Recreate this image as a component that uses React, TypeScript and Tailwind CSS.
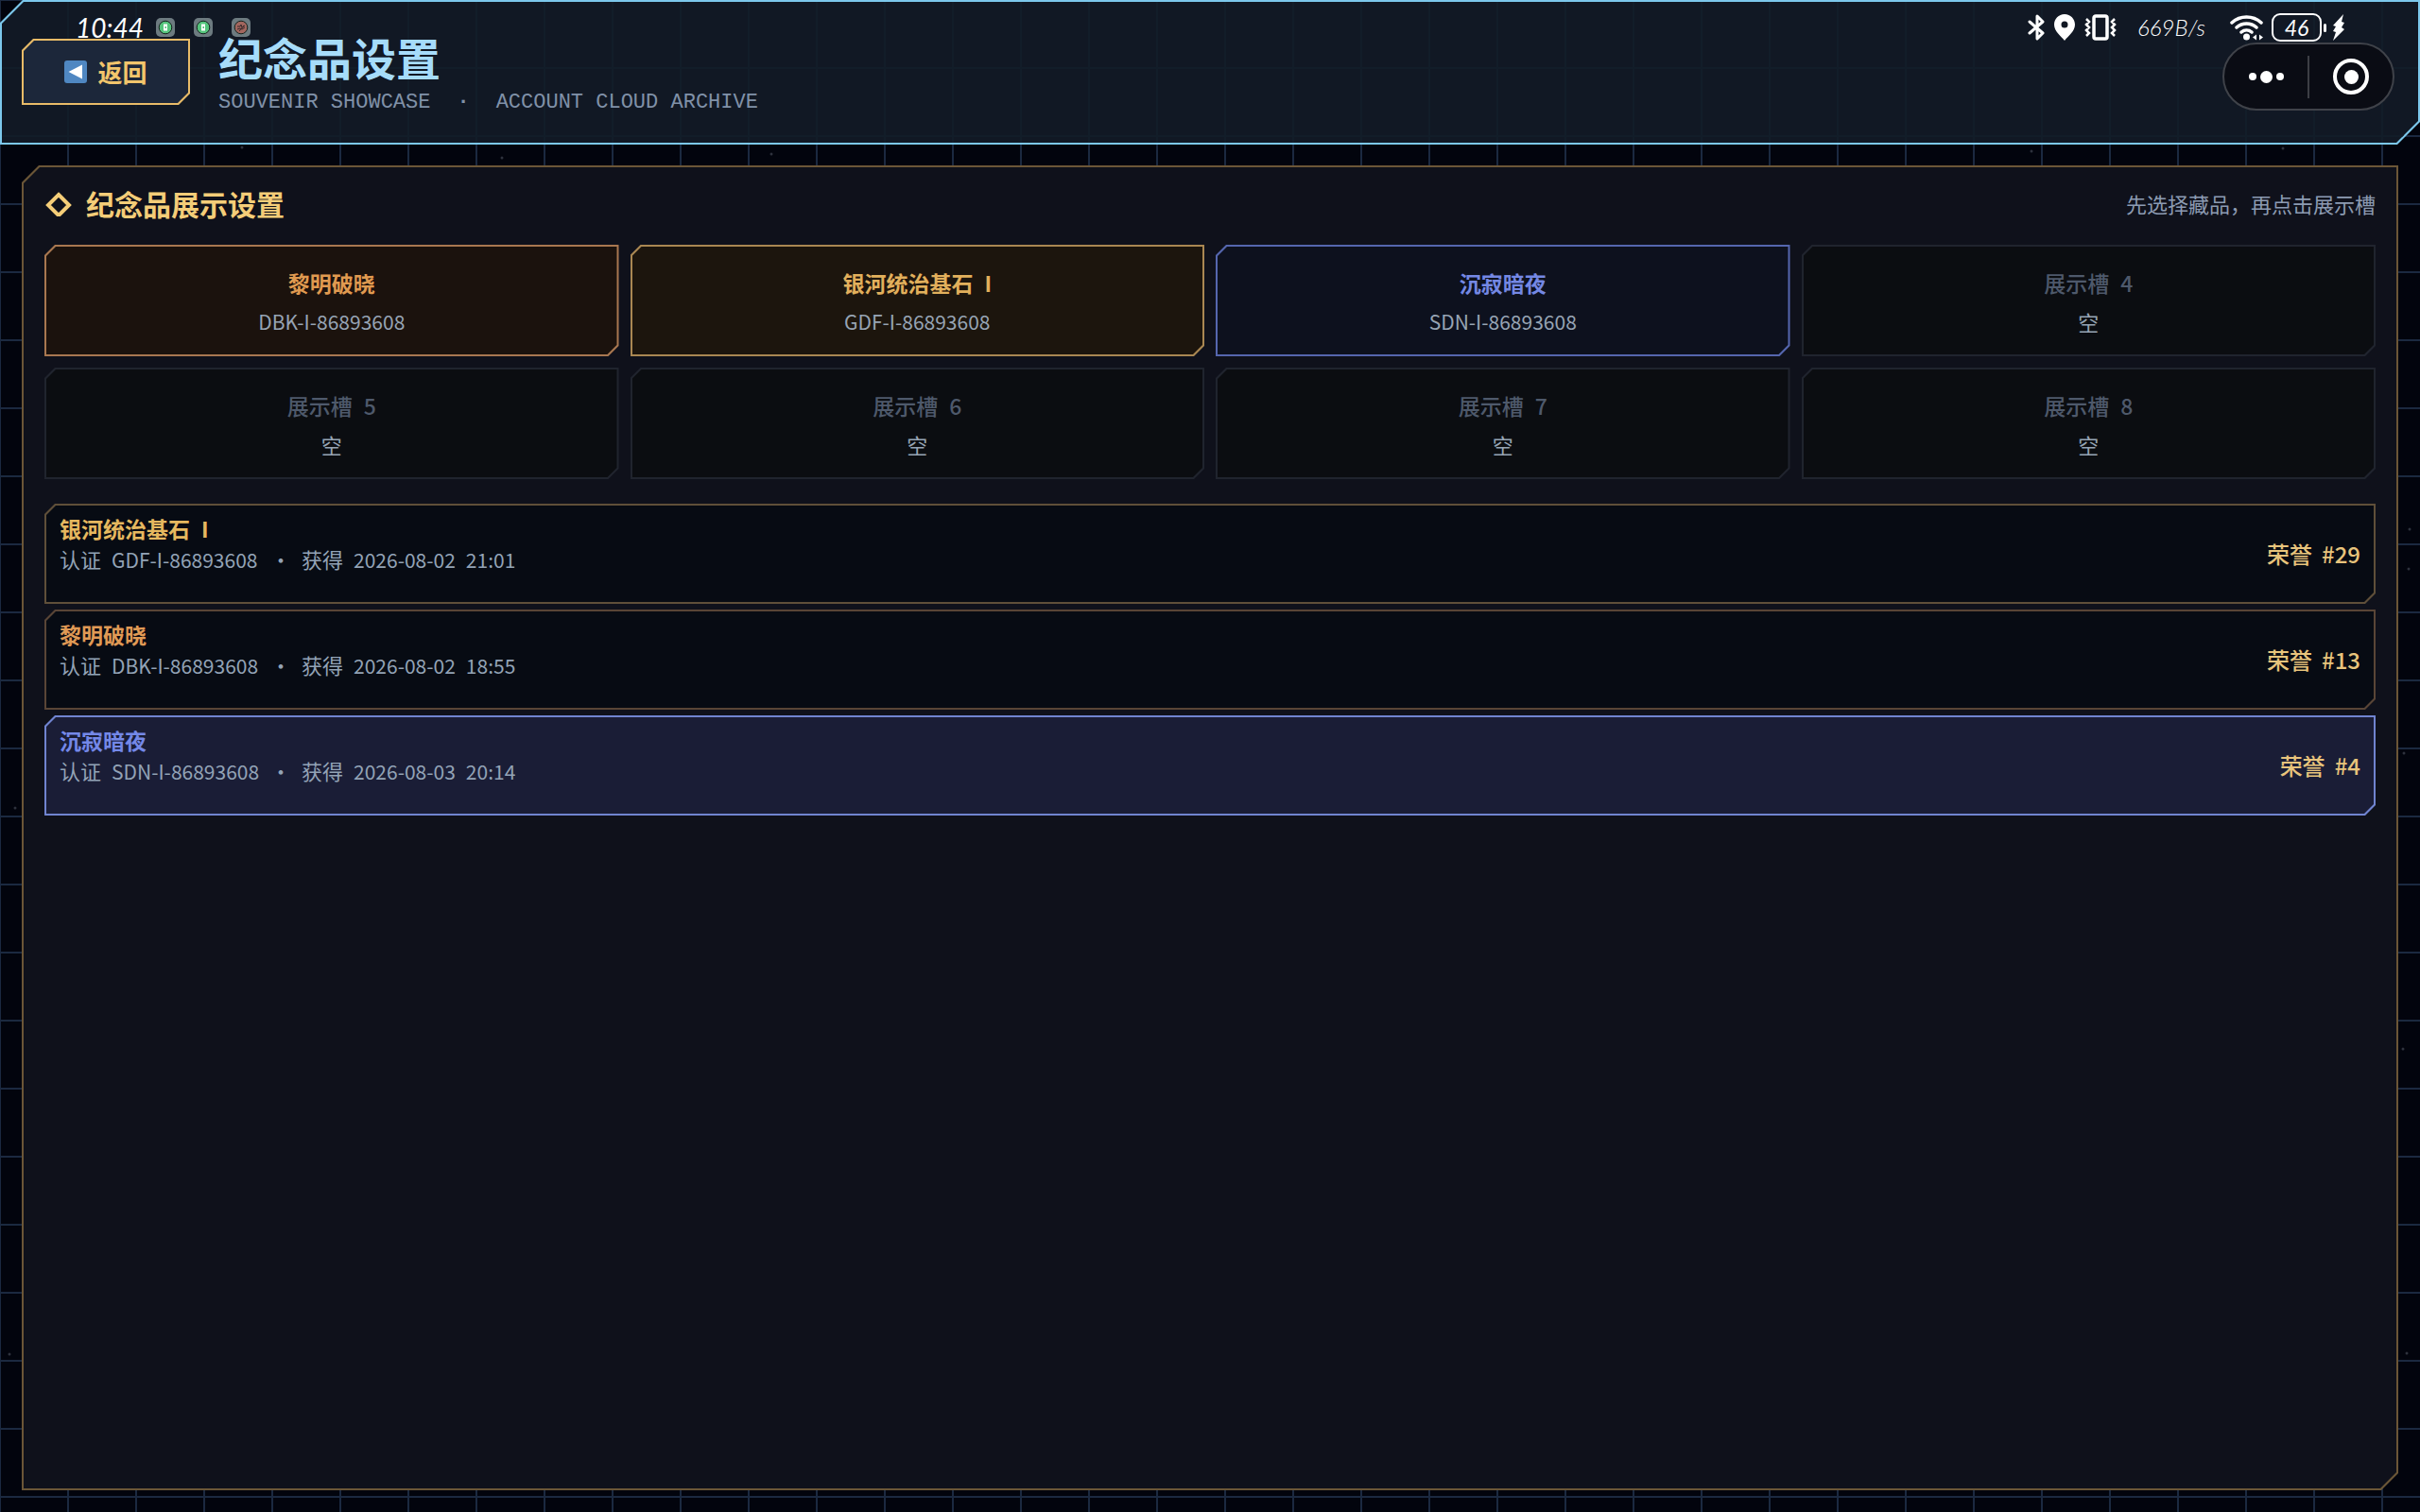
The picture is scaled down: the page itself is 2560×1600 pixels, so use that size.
import React from "react";

// Panels share one silhouette: the top-left and bottom-right corners are cut.
const CUT =
  "[clip-path:polygon(var(--cut)_0,100%_0,100%_calc(100%_-_var(--cut)),calc(100%_-_var(--cut))_100%,0_100%,0_var(--cut))]";

const slots = [
  { name: "黎明破晓", code: "DBK-I-86893608", edge: "bg-[#a87750]", fill: "bg-[#1b120d]", text: "text-[#e09a50]" },
  { name: "银河统治基石", mark: "I", code: "GDF-I-86893608", edge: "bg-[#a98752]", fill: "bg-[#1c150d]", text: "text-[#e2b05c]" },
  { name: "沉寂暗夜", code: "SDN-I-86893608", edge: "bg-[#5566ae]", fill: "bg-[#0d111e]", text: "text-[#7488e4]" },
  { name: "展示槽", mark: "4" },
  { name: "展示槽", mark: "5" },
  { name: "展示槽", mark: "6" },
  { name: "展示槽", mark: "7" },
  { name: "展示槽", mark: "8" },
];

const items = [
  {
    name: "银河统治基石",
    mark: "I",
    code: "GDF-I-86893608",
    date: "2026-08-02",
    time: "21:01",
    honor: "#29",
    edge: "bg-[#5f4f39]",
    fill: "bg-[#070b13]",
    text: "text-[#e6b85f]",
  },
  {
    name: "黎明破晓",
    code: "DBK-I-86893608",
    date: "2026-08-02",
    time: "18:55",
    honor: "#13",
    edge: "bg-[#594536]",
    fill: "bg-[#070b13]",
    text: "text-[#e09a55]",
  },
  {
    name: "沉寂暗夜",
    code: "SDN-I-86893608",
    date: "2026-08-03",
    time: "20:14",
    honor: "#4",
    edge: "bg-[#7084d0]",
    fill: "bg-[#1a1d36]",
    text: "text-[#7488e8]",
  },
];

const stars = [
  [256, 156], [531, 167], [816, 163], [2149, 160], [2415, 157], [2548, 602],
  [2542, 1110], [2546, 1432], [2549, 560], [16, 855], [10, 1433], [2543, 797],
];

const StatusBar = () => {
  return (
    <div className="absolute inset-x-0 top-0 flex items-center justify-between pl-20 pr-[79px] pt-[14px] h-11 text-white pointer-events-none font-['Lato']">
      <div className="flex items-center">
        <span className="w-[85px] text-[28px] leading-8 italic">10:44</span>
        <div className="flex gap-5">
          {["#55c47c", "#55c47c", "#a2665e"].map((color, i) => (
            <svg key={i} width="20" height="20" viewBox="0 0 20 20">
              <rect width="20" height="20" rx="5" fill="#6d7b80" />
              <circle cx="10" cy="10" r="6.8" fill={color} stroke="#15231d" strokeWidth="1" />
              {i < 2 ? (
                <>
                  <rect x="8" y="6.5" width="4" height="7" fill="#fff" />
                  <rect x="9.5" y="9" width="1.5" height="2" fill={color} />
                </>
              ) : (
                <path d="M6 9h3l1-2 1 3 3-2M6 12l3-1 2 1 3-2M8 14l5-6" stroke="#38292b" fill="none" />
              )}
            </svg>
          ))}
        </div>
      </div>
      <div className="flex items-center">
        <svg width="18" height="28" viewBox="0 0 18 28" fill="none" stroke="#fff" strokeWidth="3" strokeLinejoin="round" strokeLinecap="round">
          <path d="M2 8l14 12-6 6V2l6 6L2 20" />
        </svg>
        <svg className="ml-[10px]" width="22" height="28" viewBox="0 0 22 28">
          <path fillRule="evenodd" fill="#fff" d="M11 0C4.600 0 0 5 0 11c0 7 7 12 11 17 4-5 11-10 11-17C22 5 17.400 0 11 0zm0 7.500a3.500 3.500 0 1 1 0 7 3.500 3.500 0 0 1 0-7z" />
        </svg>
        <svg className="ml-[10px]" width="34" height="28" viewBox="0 0 34 28" fill="none" stroke="#fff">
          <rect x="10" y="2" width="14" height="24" rx="2" strokeWidth="3.500" />
          <path strokeWidth="2.500" d="M2 5l3 3-3 3 3 3-3 3 3 3-3 3M32 5l-3 3 3 3-3 3 3 3-3 3 3 3" />
        </svg>
        <span className="ml-[22px] w-[98px] text-[24px] font-light leading-7 italic">669B/s</span>
        <svg width="36" height="28" viewBox="0 0 36 28" fill="none" stroke="#fff" strokeWidth="3.500" strokeLinecap="round">
          <path d="M2 9a23 23 0 0 1 31 0M7 14a16 16 0 0 1 21 0M12 19a8.500 8.500 0 0 1 11 0" />
          <circle cx="17.500" cy="24" r="3.500" fill="#fff" stroke="none" />
          <path d="M24 24.500l4-3v6zM35 24.500l-4-3v6z" fill="#fff" stroke="none" />
        </svg>
        <div className="ml-2 flex h-[30px] w-[53px] items-center justify-center rounded-[9px] border-2 border-white text-[23px] leading-6 italic">
          46
        </div>
        <div className="ml-[2px] h-[9px] w-[3px] rounded-full bg-white" />
        <svg className="ml-[6px]" width="14" height="28" viewBox="0 0 14 28">
          <path fill="#fff" d="M12 0L1 12l3 1-3 5 3 1-3 9 12-12-3-2 3-5-3-1z" />
        </svg>
      </div>
    </div>
  );
};

const Capsule = () => {
  return (
    <div className="absolute right-[27px] top-[45px] flex h-[72px] w-[182px] items-center rounded-full border-2 border-[#3f4249] bg-[#0a0c14]">
      <button aria-label="更多" className="flex h-full flex-1 items-center justify-center gap-1">
        <span className="h-2 w-2 rounded-full bg-white" />
        <span className="h-[13px] w-[13px] rounded-full bg-white" />
        <span className="h-2 w-2 rounded-full bg-white" />
      </button>
      <span className="h-[45px] w-[2px] bg-[#3c3e45]" />
      <button aria-label="关闭" className="flex h-full flex-1 items-center justify-center">
        <span className="flex h-[38px] w-[38px] items-center justify-center rounded-full border-4 border-white">
          <span className="h-[15px] w-[15px] rounded-full bg-white" />
        </span>
      </button>
    </div>
  );
};

const Header = () => {
  return (
    <header className="relative">
      <div className={`bg-[#7cc8ec] p-[2px] [--cut:24px] ${CUT}`}>
        <div
          className={`flex items-start gap-[30px] bg-[#111824] bg-[linear-gradient(90deg,#121d29_2px,transparent_2px),linear-gradient(#121d29_2px,transparent_2px)] bg-size-[72px_72px] bg-position-[-3px_-3px] px-[21px] pb-[30px] pt-[39px] [--cut:23px] ${CUT}`}
        >
          <button className={`bg-[#e8bb68] p-[2px] [--cut:12px] ${CUT}`}>
            <span className={`flex h-[66px] w-[174px] items-center justify-center gap-[11px] bg-[#1c273a] [--cut:11px] ${CUT}`}>
              <svg width="24" height="24" viewBox="0 0 24 24">
                <rect width="24" height="24" rx="3" fill="#4f87c2" />
                <path d="M4.500 12L19 4.500v15z" fill="#fff" />
              </svg>
              <span className="text-[26px] font-bold leading-8 text-[#f2c56c]">返回</span>
            </span>
          </button>
          <div>
            <h1 className="text-[47px] font-bold leading-[38px] text-[#a6dcfa]">纪念品设置</h1>
            <p className="mt-[18px] text-[22px] leading-6 text-[#8091a8] font-['Liberation_Mono',monospace]">
              SOUVENIR SHOWCASE<span className="mx-7 font-bold">·</span>ACCOUNT CLOUD ARCHIVE
            </p>
          </div>
        </div>
      </div>
      <StatusBar />
      <Capsule />
    </header>
  );
};

const App = () => {
  return (
    <div className="relative flex min-h-screen flex-col bg-[#02040d] bg-[linear-gradient(90deg,#1b2940_2px,transparent_2px),linear-gradient(#1b2940_2px,transparent_2px)] bg-size-[72px_72px] bg-position-[-1px_-1px] font-['Noto_Sans_CJK_SC',sans-serif]">
      <svg className="pointer-events-none absolute inset-0 h-full w-full" aria-hidden="true">
        {stars.map(([x, y]) => (
          <circle key={`${x}-${y}`} cx={x} cy={y} r="1.500" fill="#2e323d" />
        ))}
      </svg>
      <Header />
      <main className="flex flex-1 flex-col px-[23px] pb-[23px] pt-[22px]">
        <div className={`flex flex-1 flex-col bg-[#6b5637] p-[2px] [--cut:18px] ${CUT}`}>
          <section className={`flex-1 bg-[#0f111b] px-[22px] pt-5 [--cut:17px] ${CUT}`}>
            <div className="flex items-center justify-between">
              <h2 className="flex items-center gap-[14px] text-[30px] font-bold leading-9 text-[#f4cd78]">
                <svg width="30" height="28" viewBox="0 0 30 28" fill="none" stroke="#f4cd78" strokeWidth="4">
                  <path d="M15 5l11 11-11 11L4 16z" />
                </svg>
                纪念品展示设置
              </h2>
              <p className="text-[22px] leading-9 text-[#8c9bb2]">先选择藏品，再点击展示槽</p>
            </div>

            <div className="mt-[26px] grid grid-cols-4 gap-3">
              {slots.map((slot) => (
                <button key={slot.name + slot.mark} className={`p-[2px] [--cut:11px] ${slot.edge ?? "bg-[#20242e]"} ${CUT}`}>
                  <span
                    className={`flex flex-col items-center gap-[10px] pb-[19px] pt-[22px] [--cut:10px] ${slot.fill ?? "bg-[#0b0d11]"} ${CUT}`}
                  >
                    <span
                      className={`flex gap-3 text-[23px] leading-8 ${slot.text ? `font-bold ${slot.text}` : "font-medium text-[#4e596b]"}`}
                    >
                      {slot.name}
                      {slot.mark && <span>{slot.mark}</span>}
                    </span>
                    {slot.code ? (
                      <span className="text-[21px] leading-[31px] text-[#97a4b4]">{slot.code}</span>
                    ) : (
                      <span className="text-[22px] leading-[31px] text-[#97a4b4]">空</span>
                    )}
                  </span>
                </button>
              ))}
            </div>

            <div className="mt-[26px] flex flex-col gap-[6px]">
              {items.map((item) => (
                <button key={item.code} className={`p-[2px] text-left [--cut:11px] ${item.edge} ${CUT}`}>
                  <span className={`flex h-[102px] items-center justify-between px-[14px] [--cut:10px] ${item.fill} ${CUT}`}>
                    <span className="flex h-full flex-col pt-2">
                      <span className={`flex gap-3 text-[23px] font-bold leading-8 ${item.text}`}>
                        {item.name}
                        {item.mark && <span>{item.mark}</span>}
                      </span>
                      <span className="flex items-baseline gap-[11px] whitespace-nowrap text-[22px] leading-8 text-[#93a3b6]">
                        <span>认证</span>
                        <span className="w-[157px] text-[21px]">{item.code}</span>
                        <span className="w-[22px] text-center">·</span>
                        <span>获得</span>
                        <span className="text-[21px]">{item.date}</span>
                        <span className="text-[21px]">{item.time}</span>
                      </span>
                    </span>
                    <span className="flex gap-[10px] text-[24px] font-medium leading-8 text-[#e8c47c]">
                      荣誉 <span>{item.honor}</span>
                    </span>
                  </span>
                </button>
              ))}
            </div>
          </section>
        </div>
      </main>
    </div>
  );
};

export default App;
